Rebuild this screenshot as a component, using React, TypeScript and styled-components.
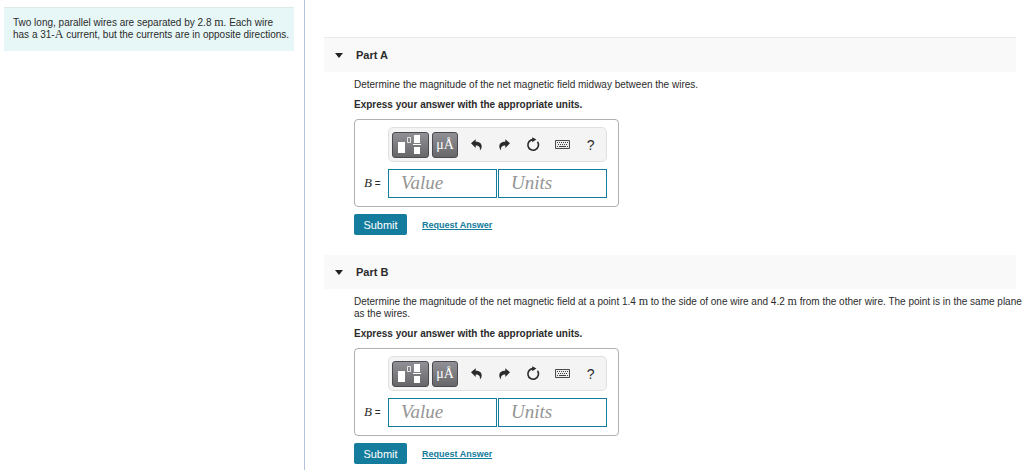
import React, { useId } from "react";
import styled, { createGlobalStyle } from "styled-components";

const GlobalStyle = createGlobalStyle`
  *, *::before, *::after { box-sizing: border-box; }
  body {
    margin: 0;
    background: #fff;
    color: #2b2b2b;
    font: 10px/12px "Liberation Sans", Arial, sans-serif;
  }
  p, h2 { margin: 0; }
  button, input { font: inherit; }
`;

const Page = styled.div`
  display: grid;
  grid-template-columns: 305px minmax(0, 1fr);
  min-height: 100vh;
`;

const ProblemPane = styled.aside`
  padding: 7px 10px 0 4px;
  border-right: 1px solid #b4c3dc;
`;

const Problem = styled.p`
  padding: 9px 2px 10px 9px;
  background: #e7f7f7;
  border-top: 1px solid #dcebe9;
`;

const Unit = styled.span`
  font-family: "Liberation Serif", "Times New Roman", serif;
  font-size: 12px;
  line-height: 10px;
`;

const Work = styled.main`
  padding: 37px 0 0 19px;
`;

const PartSection = styled.section`
  padding-bottom: 20px;
`;

const PartHeader = styled.header<{ $first: boolean }>`
  display: flex;
  align-items: center;
  gap: 13px;
  height: ${(p) => (p.$first ? 35 : 34)}px;
  margin-right: 8px;
  padding-left: 11px;
  background: #f9f9f9;
  border-top: ${(p) => (p.$first ? "1px solid #e9e9e9" : "0")};
`;

const Toggle = styled.button`
  display: flex;
  padding: 0;
  border: 0;
  background: none;
  color: #222;
`;

const PartTitle = styled.h2`
  font-size: 11px;
  line-height: 14px;
`;

const PartBody = styled.div`
  padding: 7px 0 0 30px;
`;

const Instruction = styled.p`
  margin: 8px 0;
  font-weight: bold;
`;

const AnswerBox = styled.div`
  display: grid;
  grid-template-columns: 24px 219px;
  align-items: center;
  row-gap: 6px;
  width: fit-content;
  height: 88px;
  padding: 7px 11px 8px 9px;
  border: 1px solid #b0b0b0;
  border-radius: 4px;
`;

const Toolbar = styled.div`
  grid-column: 2;
  display: flex;
  align-items: center;
  gap: 3px;
  height: 35px;
  padding: 0 1px 0 3px;
  background: #f4f4f4;
  border: 1px solid #e0e0e0;
  border-radius: 5px;
`;

const DarkButton = styled.button<{ $width: number }>`
  display: flex;
  align-items: center;
  justify-content: center;
  width: ${(p) => p.$width}px;
  height: 26px;
  padding: 0;
  border: 1px solid #4b4b4f;
  border-radius: 3px;
  background: linear-gradient(#909096, #67676a);
  color: #fff;
  font-family: "Liberation Serif", "Times New Roman", serif;
  font-size: 14px;
  line-height: 16px;
`;

const IconRow = styled.div`
  flex: 1;
  display: grid;
  grid-template-columns: repeat(5, 1fr);
  padding-left: 1px;
`;

const IconButton = styled.button`
  display: flex;
  align-items: center;
  justify-content: center;
  height: 26px;
  padding: 0;
  border: 0;
  background: none;
  color: #2b2b2b;
  font-size: 14px;
`;

const VariableLabel = styled.label`
  font-size: 10px;
  white-space: nowrap;
  i {
    font-family: "Liberation Serif", "Times New Roman", serif;
    font-size: 13px;
  }
`;

const Fields = styled.div`
  display: grid;
  grid-template-columns: 1fr 1fr;
  gap: 1px;
`;

const Field = styled.input`
  width: 100%;
  height: 29px;
  padding: 0 12px;
  border: 1px solid #147c9c;
  border-radius: 0;
  background: #fff;
  font-family: "Liberation Serif", "Times New Roman", serif;
  font-style: italic;
  font-size: 19px;
  &::placeholder { color: #949494; opacity: 1; }
`;

const Actions = styled.div`
  display: flex;
  align-items: center;
  gap: 15px;
  margin-top: 7px;
`;

const SubmitButton = styled.button`
  width: 53px;
  height: 21px;
  padding: 0;
  border: 0;
  border-radius: 2px;
  background: #147c9c;
  color: #fff;
  font-size: 11px;
`;

const RequestLink = styled.a`
  color: #147c9c;
  font-size: 9px;
  font-weight: bold;
`;

const TemplatesIcon = () => (
  <svg width="25" height="20" viewBox="0 0 25 20" aria-hidden="true">
    <path fill="#fff" d="M0 7h7v11H0zM16 0h6v8h-6zM15 9h8v1h-8zM16 12h6v7h-6z" />
    <path fill="none" stroke="#fff" strokeWidth=".8" d="M9.5 2.5h3v5h-3z" />
  </svg>
);

const UndoIcon = ({ flip = false }: { flip?: boolean }) => (
  <svg width="11" height="12" viewBox="0 0 11 12" aria-hidden="true">
    <path
      transform={flip ? "matrix(-1 0 0 1 11 0)" : undefined}
      fill="currentColor"
      d="M0 4.3 4.7.2v2.6c3.8 0 6 1.6 6 4.7 0 1.4-.6 2.8-1.8 3.9.5-3.3-1-4.8-4.2-4.8v2.3z"
    />
  </svg>
);

const ResetIcon = () => (
  <svg width="14" height="15" viewBox="0 0 14 15" aria-hidden="true">
    <path fill="none" stroke="currentColor" strokeWidth="1.6" d="M7.5 2.6a5.3 5.3 0 1 0 4 2.2" />
    <path fill="currentColor" d="M6.2.2v5L10.4 2.4z" />
  </svg>
);

const KeyboardIcon = () => (
  <svg width="15" height="9" viewBox="0 0 15 9" aria-hidden="true">
    <path fill="#eee" stroke="#4a4a4a" d="M.5.5h14v8H.5z" />
    <path stroke="#444" strokeDasharray="1 1" d="M2 2.5h11M3 4.5h10" />
    <path stroke="#444" d="M2 6.5h1M4 6.5h7M12 6.5h1" />
  </svg>
);

const CaretIcon = () => (
  <svg width="8" height="5" viewBox="0 0 8 5" aria-hidden="true">
    <path fill="currentColor" d="M0 0h8L4 5z" />
  </svg>
);

type PartProps = { title: string; first?: boolean; children: React.ReactNode };

function Part({ title, first = false, children }: PartProps) {
  const id = useId();
  return (
    <PartSection>
      <PartHeader $first={first}>
        <Toggle aria-label={`Collapse ${title}`} aria-expanded="true"><CaretIcon /></Toggle>
        <PartTitle>{title}</PartTitle>
      </PartHeader>
      <PartBody>
        <p>{children}</p>
        <Instruction>Express your answer with the appropriate units.</Instruction>
        <AnswerBox>
          <Toolbar role="toolbar" aria-label="Answer tools">
            <DarkButton $width={37} aria-label="Templates"><TemplatesIcon /></DarkButton>
            <DarkButton $width={26}>μÅ</DarkButton>
            <IconRow>
              <IconButton aria-label="Undo"><UndoIcon /></IconButton>
              <IconButton aria-label="Redo"><UndoIcon flip /></IconButton>
              <IconButton aria-label="Reset"><ResetIcon /></IconButton>
              <IconButton aria-label="Keyboard shortcuts"><KeyboardIcon /></IconButton>
              <IconButton>?</IconButton>
            </IconRow>
          </Toolbar>
          <VariableLabel htmlFor={id}><i>B</i> =</VariableLabel>
          <Fields>
            <Field id={id} placeholder="Value" />
            <Field aria-label="Units" placeholder="Units" />
          </Fields>
        </AnswerBox>
        <Actions>
          <SubmitButton>Submit</SubmitButton>
          <RequestLink href="#">Request Answer</RequestLink>
        </Actions>
      </PartBody>
    </PartSection>
  );
}

export default function App() {
  return (
    <>
      <GlobalStyle />
      <Page>
        <ProblemPane>
          <Problem>
            Two long, parallel wires are separated by 2.8 <Unit>m</Unit>. Each wire
            <br />
            has a 31-<Unit>A</Unit> current, but the currents are in opposite directions.
          </Problem>
        </ProblemPane>
        <Work>
          <Part title="Part A" first>
            Determine the magnitude of the net magnetic field midway between the wires.
          </Part>
          <Part title="Part B">
            Determine the magnitude of the net magnetic field at a point 1.4 <Unit>m</Unit> to the
            side of one wire and 4.2 <Unit>m</Unit> from the other wire. The point is in the same
            plane as the wires.
          </Part>
        </Work>
      </Page>
    </>
  );
}
